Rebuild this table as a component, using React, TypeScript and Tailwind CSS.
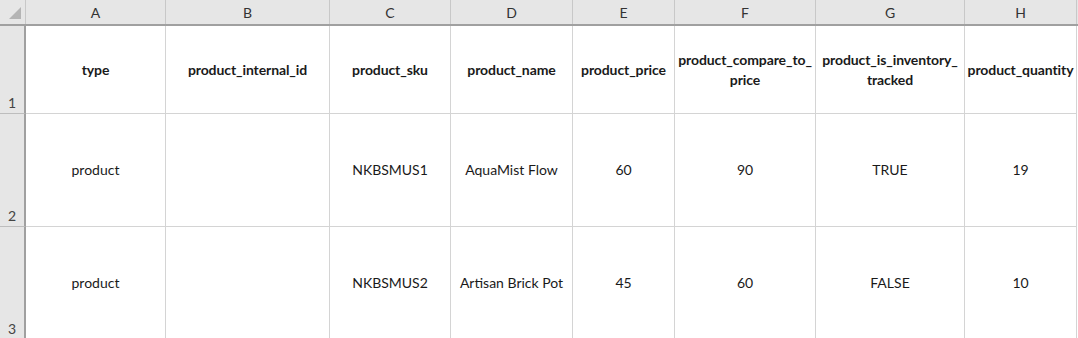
import React from 'react';

const columns = [
  { key: 'A', width: 'w-[140px]' },
  { key: 'B', width: 'w-[164px]' },
  { key: 'C', width: 'w-[121px]' },
  { key: 'D', width: 'w-[122px]' },
  { key: 'E', width: 'w-[102px]' },
  { key: 'F', width: 'w-[141px]' },
  { key: 'G', width: 'w-[149px]' },
  { key: 'H', width: 'w-[112px]' },
];

const headers: string[][] = [
  ['type'],
  ['product_internal_id'],
  ['product_sku'],
  ['product_name'],
  ['product_price'],
  ['product_compare_to_', 'price'],
  ['product_is_inventory_', 'tracked'],
  ['product_quantity'],
];

const rows: string[][] = [
  ['product', '', 'NKBSMUS1', 'AquaMist Flow', '60', '90', 'TRUE', '19'],
  ['product', '', 'NKBSMUS2', 'Artisan Brick Pot', '45', '60', 'FALSE', '10'],
];

function RowHeader({ n, height }: { n: number; height: string }) {
  return (
    <div
      className={`w-[26px] ${height} shrink-0 bg-[#e6e6e6] border-r-2 border-r-[#a0a0a0] border-b border-b-[#bdbdbd] flex items-end justify-center pb-[1px] text-[14px] text-[#444] leading-[18px]`}
    >
      {n}
    </div>
  );
}

export default function App() {
  return (
    <div
      className="w-[1078px] h-[338px] overflow-hidden bg-white text-[#1a1a1a]"
      style={{ fontFamily: 'Lato, "Liberation Sans", sans-serif' }}
    >
      {/* Column letters */}
      <div className="flex h-[26px] border-b-2 border-b-[#a0a0a0] bg-[#e6e6e6]">
        <div className="w-[26px] shrink-0 border-r border-r-[#c8c8c8] relative">
          <div className="absolute right-[4px] bottom-[5px] w-0 h-0 border-l-[12px] border-l-transparent border-b-[12px] border-b-[#b4b4b4]" />
        </div>
        {columns.map((c) => (
          <div
            key={c.key}
            className={`${c.width} shrink-0 border-r border-r-[#c8c8c8] flex items-center justify-center text-[14px] text-[#333]`}
          >
            {c.key}
          </div>
        ))}
        <div className="flex-1" />
      </div>

      {/* Row 1: field names */}
      <div className="flex">
        <RowHeader n={1} height="h-[88px]" />
        {columns.map((c, i) => (
          <div
            key={c.key}
            className={`${c.width} shrink-0 h-[88px] border-r border-b border-[#d4d4d4] flex flex-col items-center justify-center font-bold text-[14px] tracking-[-0.1px] leading-[20px] pt-[1px]`}
          >
            {headers[i].map((line) => (
              <span key={line} className="whitespace-nowrap">
                {line}
              </span>
            ))}
          </div>
        ))}
      </div>

      {/* Data rows */}
      {rows.map((r, ri) => (
        <div key={ri} className="flex">
          <RowHeader n={ri + 2} height="h-[113px]" />
          {columns.map((c, i) => (
            <div
              key={c.key}
              className={`${c.width} shrink-0 h-[113px] border-r border-b border-[#d4d4d4] flex items-center justify-center text-[14px] leading-[20px]`}
            >
              {r[i]}
            </div>
          ))}
        </div>
      ))}
    </div>
  );
}
